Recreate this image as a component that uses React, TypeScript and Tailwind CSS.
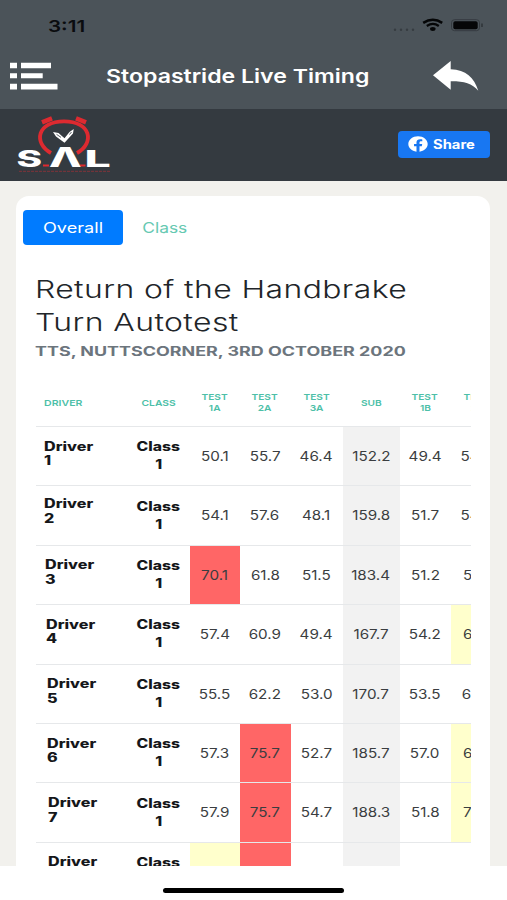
import type { ReactNode } from 'react';
import { FaFacebook } from 'react-icons/fa';

type Flag = 'red' | 'yellow';

interface Result {
  driver: string;
  group: string;
  times: string[];
  flags?: Record<number, Flag>;
  nameClass: string;
}

const COLUMNS = ['Test 1A', 'Test 2A', 'Test 3A', 'Sub', 'Test 1B', 'Test 2B'];
const SUB_COLUMN = 3;

const RESULTS: Result[] = [
  { driver: 'Driver 1', group: 'Class 1', times: ['50.1', '55.7', '46.4', '152.2', '49.4', '54.4'], nameClass: 'pl-[8px] pb-[4px]' },
  { driver: 'Driver 2', group: 'Class 1', times: ['54.1', '57.6', '48.1', '159.8', '51.7', '54.4'], nameClass: 'pl-[8.5px] pb-[7px]' },
  { driver: 'Driver 3', group: 'Class 1', times: ['70.1', '61.8', '51.5', '183.4', '51.2', '51.7'], flags: { 0: 'red' }, nameClass: 'pl-[9.5px] pb-[4px]' },
  { driver: 'Driver 4', group: 'Class 1', times: ['57.4', '60.9', '49.4', '167.7', '54.2', '61.7'], flags: { 5: 'yellow' }, nameClass: 'pl-[10.5px] pb-[4px]' },
  { driver: 'Driver 5', group: 'Class 1', times: ['55.5', '62.2', '53.0', '170.7', '53.5', '61.2'], nameClass: 'pl-[11px] pb-[4px]' },
  { driver: 'Driver 6', group: 'Class 1', times: ['57.3', '75.7', '52.7', '185.7', '57.0', '61.7'], flags: { 1: 'red', 5: 'yellow' }, nameClass: 'pl-[11.5px] pb-[4px]' },
  { driver: 'Driver 7', group: 'Class 1', times: ['57.9', '75.7', '54.7', '188.3', '51.8', '71.2'], flags: { 1: 'red', 5: 'yellow' }, nameClass: 'pl-[12px] pb-[4px]' },
  { driver: 'Driver 8', group: 'Class 1', times: ['', '', '', '', '', ''], flags: { 0: 'yellow', 1: 'red' }, nameClass: 'pl-[12px] pb-[4px]' },
];

const GRID = 'grid grid-cols-[92px_62px_50px_51px_52px_57px_51px_52.5px] w-[467.5px]';

function cellColor(index: number, flag?: Flag) {
  if (flag === 'red') return 'bg-[#ff6666]';
  if (flag === 'yellow') return 'bg-[#ffffcc]';
  if (index === SUB_COLUMN) return 'bg-[#f2f2f2]';
  return '';
}

function Words({ text, className }: { text: string; className: string }) {
  return (
    <>
      {text.split(' ').map((word) => <span key={word} className={className}>{word}</span>)}
    </>
  );
}

function HeadCell({ children }: { children: ReactNode }) {
  return <div className="flex flex-col items-center justify-center">{children}</div>;
}

function Logo() {
  return (
    <svg width="96" height="60" viewBox="16 115 96 60" className="shrink-0">
      <g fill="none" stroke="#dd2a30">
        <path d="M51 153 C33 143 37 121.3 64 121.3 C91 121.3 95 143 77 153" strokeWidth="3.8" />
        <path d="M42 122.3 L52 118.3 M76 118.3 L86 122.3" strokeWidth="4.6" />
        <path d="M43 165.5 H49 M80 165.5 H85.5" strokeWidth="1.8" />
        <path d="M19 171.3 H110" strokeWidth="1" strokeDasharray="3 1" opacity="0.45" />
      </g>
      <path d="M53 132 L58.5 133 L64.5 138.3 L69.5 132 L73.7 129 L73 133.5 L64.5 142.7 L56 136.5 Z" fill="#fff" />
      <path d="M56.5 134.3 L61 137.4 M69.5 134.5 L71.5 132" stroke="#343a40" strokeWidth="0.8" />
      <g fill="#fff" fontFamily="Inter, sans-serif" fontWeight="800">
        <g transform="translate(16.5 166.5) scale(1.68 1)"><text fontSize="23">S</text></g>
        <g transform="translate(49 166.7) scale(1.6 1)"><text fontSize="26.5">Λ</text></g>
        <g transform="translate(84.5 166.5) scale(1.98 1)"><text fontSize="23.5">L</text></g>
      </g>
    </svg>
  );
}

function StatusIcons() {
  return (
    <svg width="92" height="16" viewBox="392 17 92 16" className="shrink-0">
      <g fill="#363c41">
        <circle cx="395" cy="29.8" r="1.2" />
        <circle cx="401" cy="29.8" r="1.2" />
        <circle cx="407" cy="29.8" r="1.2" />
        <circle cx="413" cy="29.8" r="1.2" />
      </g>
      <g fill="none" stroke="#050607">
        <path d="M423.2 22.9 Q433 16.6 442.2 22.9" strokeWidth="2.5" />
        <path d="M426.8 26 Q433 21.9 438.8 26" strokeWidth="2.3" />
      </g>
      <ellipse cx="432.8" cy="29" rx="2.8" ry="1.9" fill="#050607" />
      <rect x="451.5" y="19.7" width="28" height="11" rx="3" fill="none" stroke="#353b40" />
      <rect x="453.3" y="21.2" width="24.4" height="8" rx="1.8" fill="#050607" />
      <path d="M482 23.5 V27" stroke="#2d3236" strokeWidth="1.4" />
    </svg>
  );
}

function MenuIcon() {
  return (
    <svg width="49" height="30" viewBox="9 61 49 30" fill="#fff" className="shrink-0">
      <path d="M10 62.7h7v5.5h-7zM21 62.7h30v5.5h-30zM10 73.3h7v5h-7zM21 73.3h21.7v5h-21.7zM10 83.7h7v5.7h-7zM21 83.7h36.5v5.7h-36.5z" />
    </svg>
  );
}

function BackIcon() {
  return (
    <svg width="47" height="32" viewBox="432 60 47 32" fill="#fff" className="shrink-0">
      <path d="M433 75.2 L450.7 61 V69.2 C466 70 474 77 478.3 90.8 C472 83.5 464 81.2 450.7 81.3 V89.7 Z" />
    </svg>
  );
}

export default function App() {
  return (
    <div className="w-[507px] h-[900px] overflow-hidden flex flex-col bg-white font-['Inter',sans-serif]">
      {/* Status bar */}
      <div className="h-[109px] shrink-0 bg-[#4b5359]">
        <div className="h-[50px] flex justify-between pl-[48px] pr-[23px]">
          <span className="block mt-[14px] h-6 leading-6 text-[16.5px] font-semibold text-[#0a0c0f] origin-left scale-x-[1.25]">3:11</span>
          <div className="mt-[17px]"><StatusIcons /></div>
        </div>
        <div className="h-[52px] flex items-center pl-[9px] pr-[28px]">
          <MenuIcon />
          <h1 className="ml-[48px] mt-[2px] flex-1 text-[19px] leading-6 font-semibold text-white whitespace-nowrap">
            <span className="inline-block origin-left scale-x-[1.215]">Stopastride Live Timing</span>
          </h1>
          <BackIcon />
        </div>
      </div>

      {/* Brand bar */}
      <div className="h-[71.5px] shrink-0 bg-[#343a40] flex justify-between pl-[16px] pr-[17.5px]">
        <div className="pt-[6px]"><Logo /></div>
        <button className="mt-[22px] h-[26.5px] w-[92px] rounded-[4px] bg-[#1877f2] flex items-center pl-[10px] text-white">
          <FaFacebook className="w-[20px] h-[16px]" preserveAspectRatio="none" />
          <span className="ml-[5px] mt-px text-[12.5px] leading-4 font-bold origin-left scale-x-[1.18]">Share</span>
        </button>
      </div>

      <div className="h-[685.5px] shrink-0 bg-[#f2f1ed] overflow-hidden pt-[15.5px] pl-[16px]">
        <div className="w-[474px] h-[700px] rounded-t-[13px] bg-white pt-[14px]">
          {/* Tabs */}
          <div className="flex pl-[6.5px] text-[14.5px]">
            <div className="w-[100.5px] h-[35px] rounded-[4px] bg-[#007bff] text-white flex items-center justify-center">
              <span className="scale-x-[1.25]">Overall</span>
            </div>
            <div className="w-[83px] h-[35px] text-[#66c9b2] flex items-center justify-center">
              <span className="scale-x-[1.2]">Class</span>
            </div>
          </div>

          <div className="pl-[19.5px] pt-[29px]">
            <h2 className="-ml-[1px] text-[24px] leading-[32.5px] font-light tracking-[0.3px] text-[#212529] whitespace-nowrap origin-left scale-x-[1.33]">
              Return of the Handbrake<br />Turn Autotest
            </h2>
            <h3 className="-ml-[1px] mt-[2px] text-[13px] leading-5 font-bold uppercase text-[#6c757d] whitespace-nowrap origin-left scale-x-[1.378]">
              TTS, Nuttscorner, 3rd October 2020
            </h3>

            {/* Results */}
            <div className="mt-[19.5px] w-[435.5px] overflow-hidden">
              <div className={`${GRID} h-[45.5px] text-[8.2px] leading-[11px] font-semibold uppercase text-[#4dbfa8]`}>
                <div className="flex items-center pl-[8px]"><span className="origin-left scale-x-[1.29]">Driver</span></div>
                <HeadCell><span className="scale-x-[1.26]">Class</span></HeadCell>
                {COLUMNS.map((name) => <HeadCell key={name}><Words text={name} className="scale-x-[1.24]" /></HeadCell>)}
              </div>
              {RESULTS.map((row) => (
                <div key={row.driver} className={`${GRID} h-[59.4px] border-t border-[#e6e8ea]`}>
                  <div className={`flex flex-col items-start justify-center text-[12.5px] leading-[14.6px] font-extrabold text-[#15171a] ${row.nameClass}`}>
                    <Words text={row.driver} className="origin-left scale-x-[1.29]" />
                  </div>
                  <div className="flex flex-col items-center justify-center text-[12.5px] leading-[18px] font-extrabold text-[#15171a]">
                    <Words text={row.group} className="scale-x-[1.26]" />
                  </div>
                  {row.times.map((time, i) => (
                    <div key={i} className={`flex items-center justify-center pt-px text-[13px] text-[#3a3d40] ${cellColor(i, row.flags?.[i])}`}>
                      <span className="scale-x-[1.17]">{time}</span>
                    </div>
                  ))}
                </div>
              ))}
            </div>
          </div>
        </div>
      </div>

      {/* Home indicator */}
      <div className="flex-1 flex justify-center pt-[22px]">
        <div className="h-[5px] w-[181px] rounded-full bg-black" />
      </div>
    </div>
  );
}
